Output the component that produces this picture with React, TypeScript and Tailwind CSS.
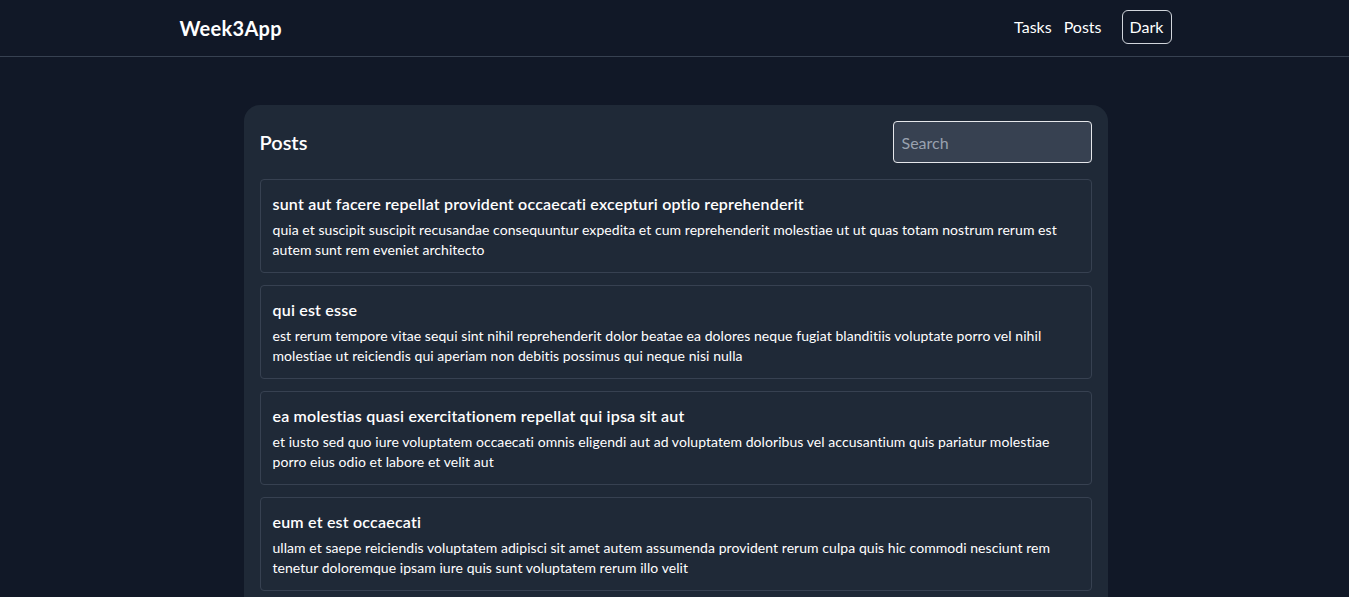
import React, { useState } from 'react'

const POSTS = [
  {
    id: 1,
    title: 'sunt aut facere repellat provident occaecati excepturi optio reprehenderit',
    body: 'quia et suscipit suscipit recusandae consequuntur expedita et cum reprehenderit molestiae ut ut quas totam nostrum rerum est autem sunt rem eveniet architecto',
  },
  {
    id: 2,
    title: 'qui est esse',
    body: 'est rerum tempore vitae sequi sint nihil reprehenderit dolor beatae ea dolores neque fugiat blanditiis voluptate porro vel nihil molestiae ut reiciendis qui aperiam non debitis possimus qui neque nisi nulla',
  },
  {
    id: 3,
    title: 'ea molestias quasi exercitationem repellat qui ipsa sit aut',
    body: 'et iusto sed quo iure voluptatem occaecati omnis eligendi aut ad voluptatem doloribus vel accusantium quis pariatur molestiae porro eius odio et labore et velit aut',
  },
  {
    id: 4,
    title: 'eum et est occaecati',
    body: 'ullam et saepe reiciendis voluptatem adipisci sit amet autem assumenda provident rerum culpa quis hic commodi nesciunt rem tenetur doloremque ipsam iure quis sunt voluptatem rerum illo velit',
  },
  {
    id: 5,
    title: 'nesciunt quas odio',
    body: 'repudiandae veniam quaerat sunt sed alias aut fugiat sit autem sed est voluptatem omnis possimus esse voluptatibus quis est aut tenetur dolor neque',
  },
]

export default function App() {
  const [q, setQ] = useState('')
  const filtered = POSTS.filter((p) => p.title.includes(q.toLowerCase()))

  return (
    <div className="min-h-screen bg-[#111827] text-white font-['Lato',sans-serif]">
      <header className="border-b border-[#374151] pl-[2px]">
        <div className="max-w-5xl mx-auto px-4 h-14 flex items-center justify-between">
          <span className="text-xl font-bold tracking-[0.3px]">Week3App</span>
          <nav className="flex items-center mb-[2px]">
            <a className="text-base mr-3">Tasks</a>
            <a className="text-base">Posts</a>
            <button className="ml-5 h-[34px] w-[50px] border border-gray-300 rounded-md text-base">Dark</button>
          </nav>
        </div>
      </header>

      <main className="pt-12 pl-[18px] pr-4">
        <div className="w-[864px] mx-auto bg-[#1f2937] rounded-2xl p-4">
          <div className="flex items-center justify-between mb-4">
            <h2 className="text-xl font-semibold">Posts</h2>
            <input
              value={q}
              onChange={(e) => setQ(e.target.value)}
              placeholder="Search"
              className="w-[199px] h-[42px] px-2 bg-[#374151] border border-gray-200 rounded text-base placeholder:text-gray-400 outline-none"
            />
          </div>
          <div className="space-y-3">
            {filtered.map((p) => (
              <div key={p.id} className="border border-[#374151] rounded p-3">
                <h3 className="text-base font-semibold leading-6 mb-1 tracking-[0.2px]">{p.title}</h3>
                <p className="text-sm leading-5 tracking-[0.06px]">{p.body}</p>
              </div>
            ))}
          </div>
        </div>
      </main>
    </div>
  )
}
